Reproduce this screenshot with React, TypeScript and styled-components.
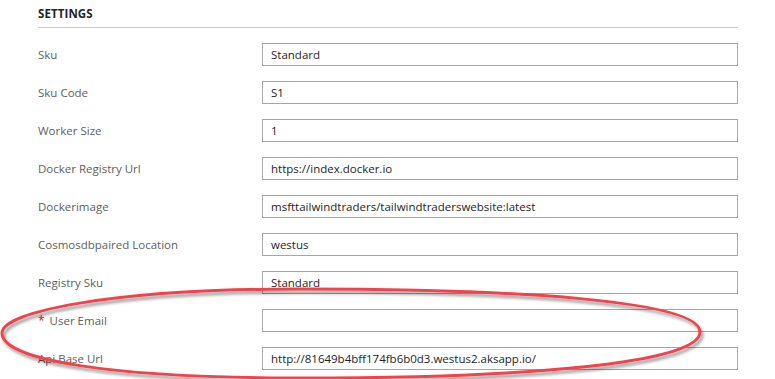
import React from "react";
import styled, { createGlobalStyle } from "styled-components";

const GlobalStyle = createGlobalStyle`
  html, body {
    margin: 0;
    padding: 0;
    background: #ffffff;
  }
  body {
    font-family: "Open Sans", "Noto Sans", "Liberation Sans", sans-serif;
    overflow: hidden;
  }
`;

const Page = styled.div`
  position: relative;
  width: 775px;
  height: 379px;
  overflow: hidden;
`;

const Section = styled.section`
  width: 700px;
  padding: 0 0 0 38px;
`;

const Header = styled.h2`
  margin: 0;
  padding: 6px 0 6px;
  height: 15px;
  font-size: 11.5px;
  font-weight: 700;
  letter-spacing: 0.1px;
  color: #252525;
  border-bottom: 1px solid #cccccc;
`;

const Rows = styled.div`
  display: flex;
  flex-direction: column;
  gap: 15px;
  margin-top: 15px;
`;

const Row = styled.div`
  display: grid;
  grid-template-columns: 224px 1fr;
  align-items: center;
`;

const Label = styled.label`
  font-size: 11.5px;
  color: #5e5e5e;
  display: flex;
  align-items: center;
`;

const Star = styled.span`
  color: #b0262d;
  margin-right: 5px;
  font-size: 12px;
`;

const Field = styled.div`
  box-sizing: border-box;
  height: 23px;
  border: 1px solid #a6a6a6;
  padding: 0 8px;
  display: flex;
  align-items: center;
  font-size: 11.5px;
  color: #252525;
  background: #ffffff;
`;

const Overlay = styled.svg`
  position: absolute;
  left: 0;
  top: 0;
  pointer-events: none;
`;

type Setting = { label: string; value: string; required?: boolean };

const settings: Setting[] = [
  { label: "Sku", value: "Standard" },
  { label: "Sku Code", value: "S1" },
  { label: "Worker Size", value: "1" },
  { label: "Docker Registry Url", value: "https://index.docker.io" },
  { label: "Dockerimage", value: "msfttailwindtraders/tailwindtraderswebsite:latest" },
  { label: "Cosmosdbpaired Location", value: "westus" },
  { label: "Registry Sku", value: "Standard" },
  { label: "User Email", value: "", required: true },
  { label: "Api Base Url", value: "http://81649b4bff174fb6b0d3.westus2.aksapp.io/" },
];

export default function App() {
  return (
    <Page>
      <GlobalStyle />
      <Section>
        <Header>SETTINGS</Header>
        <Rows>
          {settings.map((s) => (
            <Row key={s.label}>
              <Label>
                {s.required && <Star>*</Star>}
                {s.label}
              </Label>
              <Field>{s.value}</Field>
            </Row>
          ))}
        </Rows>
      </Section>

      {/* hand-drawn highlight ring */}
      <Overlay width="775" height="379" viewBox="0 0 775 379">
        <defs>
          <filter id="shadow" x="-10%" y="-30%" width="120%" height="160%">
            <feDropShadow dx="2" dy="3" stdDeviation="1.8" floodColor="#000" floodOpacity="0.4" />
          </filter>
        </defs>
        <path
          d="M 700 332 C 700 301, 520 289, 300 289 C 110 289, 2 312, 2 333 C 2 360, 110 378, 300 378 C 520 378, 700 364, 700 332 Z"
          fill="none"
          stroke="#f2434b"
          strokeWidth="3"
          filter="url(#shadow)"
        />
      </Overlay>
    </Page>
  );
}
